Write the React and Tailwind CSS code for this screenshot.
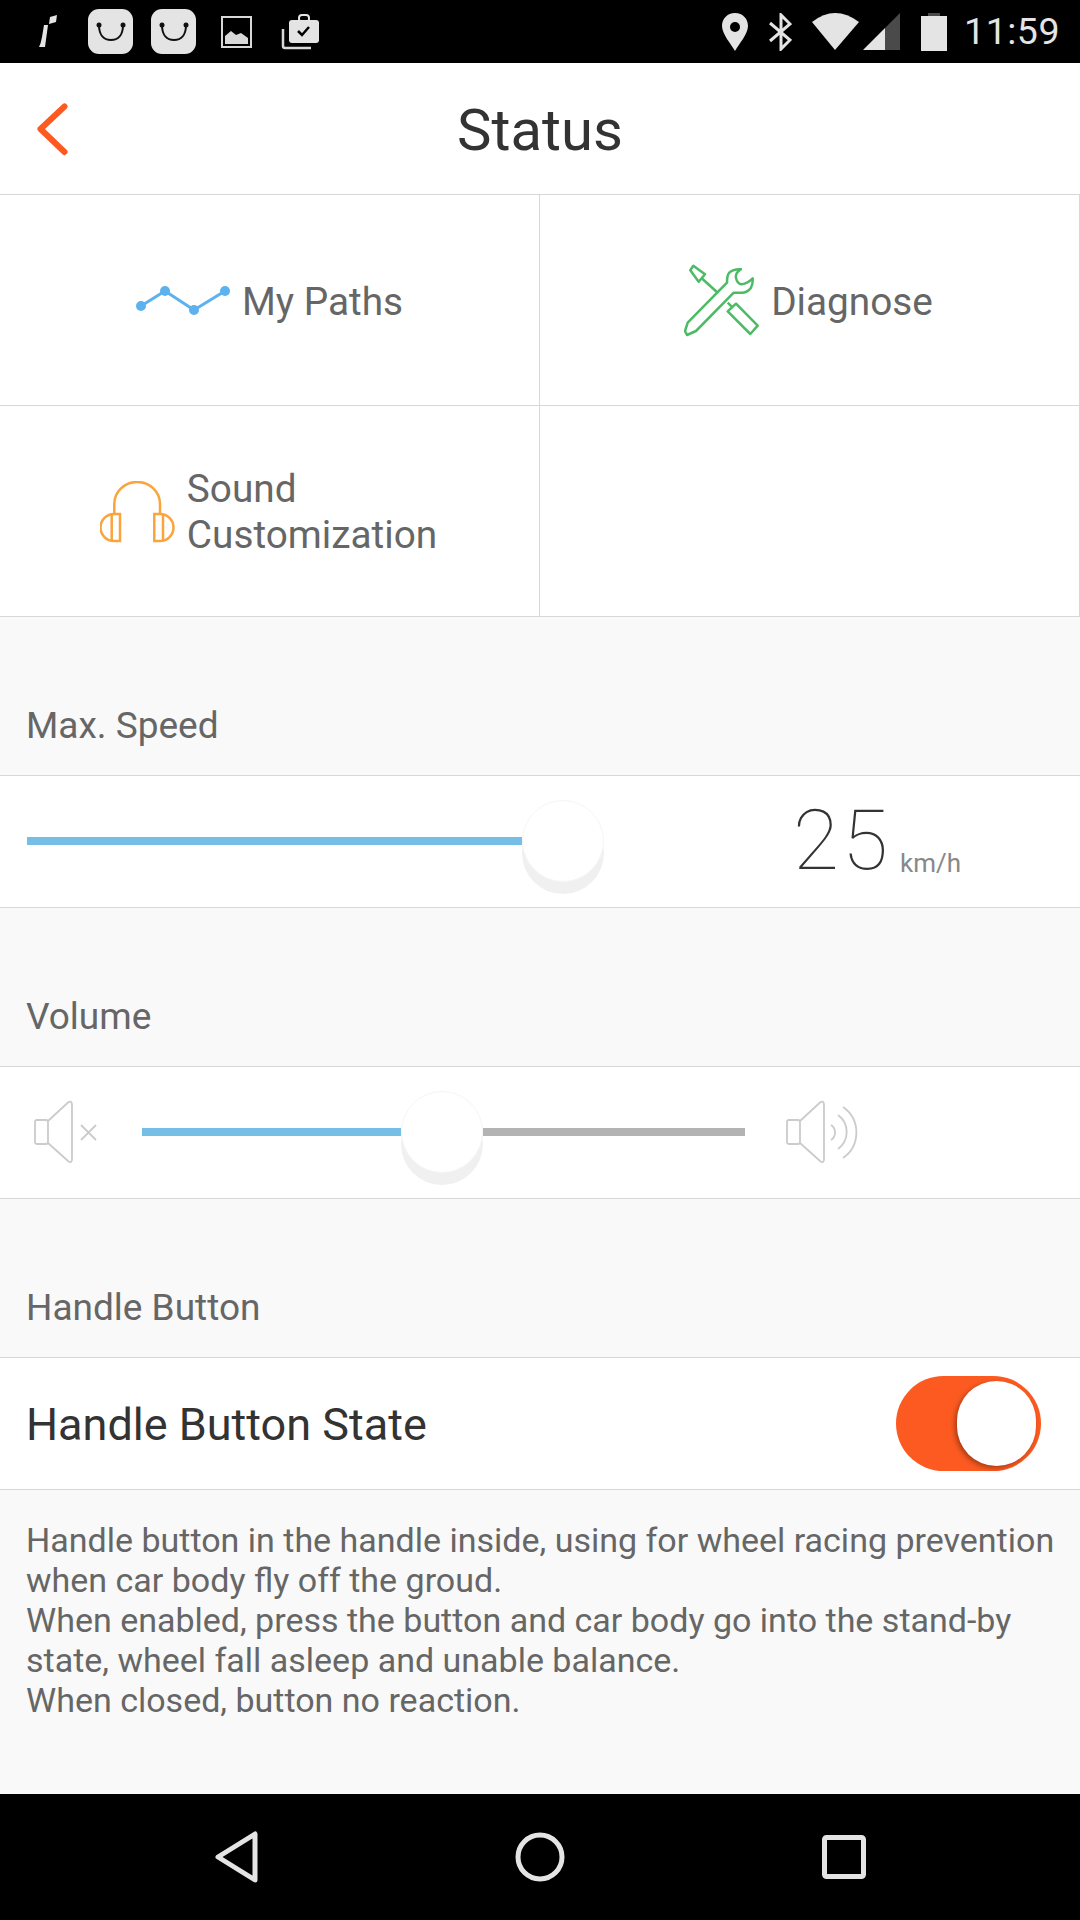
function StatusBar() {
  return (
    <div className="h-[63px] bg-black flex items-center text-[#e4e4e4]">
      {/* notification icons */}
      <svg className="ml-[38px]" width="19" height="33" viewBox="0 0 19 33">
        <path d="M6 10 L10 10 L7 32 L1 32 Q3 28 4 22 Z M12 2 L19 0 L18 7 L11 9 Z" fill="#e4e4e4" />
      </svg>
      <ShopTile className="ml-[31px]" />
      <ShopTile className="ml-[18px]" />
      <svg className="ml-[25px]" width="31" height="32" viewBox="0 0 31 32">
        <rect x="1" y="1" width="29" height="30" fill="none" stroke="#d8d8d8" strokeWidth="2" />
        <path d="M4 28 V20 L10 15 L15 19 L20 17 L27 22 V28 Z" fill="#d8d8d8" />
      </svg>
      <svg className="ml-[29px]" width="38" height="36" viewBox="0 0 38 36">
        <path d="M2 15 V32 Q2 34 4 34 H30" fill="none" stroke="#d8d8d8" strokeWidth="2.5" />
        <rect x="8" y="6" width="30" height="23" rx="3" fill="#e4e4e4" />
        <rect x="18" y="1" width="10" height="7" rx="3" fill="none" stroke="#e4e4e4" strokeWidth="2" />
        <path d="M17 17 L21 21 L28 13" fill="none" stroke="#000" strokeWidth="2.5" />
      </svg>

      {/* system icons */}
      <svg className="ml-auto" width="26" height="38" viewBox="0 0 26 38">
        <path d="M13 0 C5 0 0 6 0 13 C0 21 9 31 13 38 C17 31 26 21 26 13 C26 6 21 0 13 0 Z" fill="#e4e4e4" />
        <circle cx="13" cy="14" r="5" fill="#000" />
      </svg>
      <svg className="ml-[21px]" width="23" height="38" viewBox="0 0 23 38">
        <path d="M1 10 L21 27 L12 36 V2 L21 11 L1 28" fill="none" stroke="#e4e4e4" strokeWidth="3" />
      </svg>
      <svg className="ml-[20px]" width="47" height="37" viewBox="0 0 47 37">
        <path d="M0 9 Q23 -9 47 9 L23 37 Z" fill="#e4e4e4" />
      </svg>
      <svg className="ml-[4px]" width="37" height="37" viewBox="0 0 37 37">
        <path d="M0 37 L22 15 V37 Z" fill="#e4e4e4" />
        <path d="M22 15 L37 0 V37 H22 Z" fill="#4a4a4a" />
      </svg>
      <svg className="ml-[21px]" width="26" height="38" viewBox="0 0 26 38">
        <rect x="7" y="0" width="12" height="4" fill="#4a4a4a" />
        <rect x="0" y="3" width="26" height="35" fill="#e4e4e4" />
      </svg>
      <span className="ml-[17px] mr-[20px] text-[37.5px] leading-none tracking-[0.5px]">11:59</span>
    </div>
  );
}

function ShopTile({ className }) {
  return (
    <div className={`w-[45px] h-[45px] rounded-[11px] bg-[#e4e4e4] flex items-center justify-center ${className}`}>
      <svg width="30" height="20" viewBox="0 0 30 20">
        <path d="M3 3 C3 13 8 18 15 18 C22 18 27 13 27 3" fill="none" stroke="#111" strokeWidth="2" />
        <circle cx="3" cy="3" r="2.5" fill="#111" />
        <circle cx="27" cy="3" r="2.5" fill="#111" />
      </svg>
    </div>
  );
}

function PathsIcon() {
  return (
    <svg className="mt-[2px]" width="96" height="30" viewBox="0 0 96 30">
      <polyline points="7,20 31,5 60,24 91,5" fill="none" stroke="#5cb2ee" strokeWidth="3" />
      <circle cx="7" cy="20" r="5" fill="#5cb2ee" />
      <circle cx="31" cy="5" r="5" fill="#5cb2ee" />
      <circle cx="60" cy="24" r="5" fill="#5cb2ee" />
      <circle cx="91" cy="5" r="5" fill="#5cb2ee" />
    </svg>
  );
}

function ToolsIcon() {
  return (
    <svg width="75" height="73" viewBox="0 0 75 73" fill="none" stroke="#4dbb66" strokeWidth="2.5" strokeLinejoin="round">
      <path d="M9.3 1.7 L21 10.3 L14.7 17.7 L6.3 6.3 Z" />
      <path d="M17.7 14.3 L33.7 28.7" />
      <path d="M43.7 38.7 L47.7 42.7" />
      <path d="M52 39.7 L73.7 61.7 L66.3 70 L43.7 47.3 Z" />
      <path d="M3.7 58.7 L43 18.7 Q43 11 45.3 8.7 Q49 5 57 5.3 Q51 9 52 13.7 Q53 19 57 20.3 Q63 20 68.7 14.3 Q69 20 67 23.7 Q64 28 58.7 28.7 L49.7 28.7 L12 67 L3 71 L1 67 Z" />
    </svg>
  );
}

function HeadphonesIcon() {
  return (
    <svg className="mt-[1px]" width="75" height="62" viewBox="0 0 75 62" fill="none" stroke="#f9a43c" strokeWidth="2.5">
      <path d="M14.3 33 V23 A22.8 22 0 0 1 60 23 V33" />
      <path d="M20 33 H14 A13.5 13.5 0 0 0 14 60 H20 Z" />
      <path d="M11.7 33.5 V59.5" />
      <path d="M54.3 33 H60 A13.5 13.5 0 0 1 60 60 H54.3 Z" />
      <path d="M63 33.5 V59.5" />
    </svg>
  );
}

function SpeakerBody() {
  return (
    <>
      <rect x="1" y="20" width="13" height="24" rx="2" />
      <path d="M14 21 L34 2.5 Q38 0 38 5 V59 Q38 64 34 61 L14 43" />
    </>
  );
}

function MuteIcon() {
  return (
    <svg width="64" height="65" viewBox="0 0 64 65" fill="none" stroke="#cbcbcb" strokeWidth="1.8">
      <SpeakerBody />
      <path d="M47 25 L62 40 M62 25 L47 40" />
    </svg>
  );
}

function LoudIcon() {
  return (
    <svg width="76" height="65" viewBox="0 0 76 65" fill="none" stroke="#cbcbcb" strokeWidth="1.8">
      <SpeakerBody />
      <path d="M45 25 A9 9 0 0 1 45 40" />
      <path d="M52 15 A21 21 0 0 1 52 49" />
      <path d="M57 7 A31 31 0 0 1 57 58" />
    </svg>
  );
}

function Knob() {
  return (
    <div className="w-[82px] h-[82px] shrink-0 rounded-full bg-white border border-[#f5f5f5] shadow-[0_12px_0_#f0f0f0]"></div>
  );
}

function SectionLabel({ children }) {
  return (
    <div className="h-[159px] bg-[#f9f9f9] border-b border-[#d8d8d8] flex items-end pl-[26px] pb-[27px] text-[37px] leading-[44px] text-[#666]">
      {children}
    </div>
  );
}

function NavCell({ children, empty }) {
  return (
    <div className="h-[211px] pr-[2px] border-b border-r border-[#d8d8d8] flex items-center justify-center gap-[12px]">
      {!empty && children}
    </div>
  );
}

export default function App() {
  return (
    <div className="w-[1080px] h-[1920px] flex flex-col bg-[#f9f9f9] overflow-hidden font-[Roboto,sans-serif]">
      <StatusBar />

      {/* HEADER */}
      <div className="h-[132px] bg-white border-b border-[#d8d8d8] flex items-center justify-center relative">
        <svg className="absolute left-[36px] top-[38px]" width="34" height="55" viewBox="0 0 34 55">
          <path d="M28.5 5.5 L4.5 28 L28.5 51" fill="none" stroke="#fc5a20" strokeWidth="6" strokeLinecap="round" strokeLinejoin="round" />
        </svg>
        <h1 className="text-[58px] leading-none text-[#333] mt-[2px]">Status</h1>
      </div>

      {/* SHORTCUTS */}
      <div className="grid grid-cols-2 bg-white text-[38.75px] text-[#666]">
        <NavCell>
          <PathsIcon />
          <span className="mt-[4px]">My Paths</span>
        </NavCell>
        <NavCell>
          <ToolsIcon />
          <span className="mt-[4px]">Diagnose</span>
        </NavCell>
        <NavCell>
          <HeadphonesIcon />
          <span className="mt-[2px] leading-[46px]">Sound<br />Customization</span>
        </NavCell>
        <NavCell empty />
      </div>

      {/* MAX SPEED */}
      <SectionLabel>Max. Speed</SectionLabel>
      <div className="h-[132px] pb-[1px] bg-white border-b border-[#d8d8d8] flex items-center pl-[27px]">
        <div className="w-[495px] h-[8px] bg-[#75bfe6]"></div>
        <Knob />
        <div className="ml-[189px] flex items-baseline">
          <span className="text-[84px] leading-none font-thin tracking-[3px] text-[#333]">25</span>
          <span className="ml-[9px] text-[26px] text-[#888] translate-y-[3px]">km/h</span>
        </div>
      </div>

      {/* VOLUME */}
      <SectionLabel>Volume</SectionLabel>
      <div className="h-[132px] pb-[1px] bg-white border-b border-[#d8d8d8] flex items-center pl-[34px]">
        <MuteIcon />
        <div className="ml-[44px] w-[259px] h-[8px] bg-[#75bfe6]"></div>
        <Knob />
        <div className="w-[262px] h-[8px] bg-[#b3b3b3]"></div>
        <div className="ml-[41px]">
          <LoudIcon />
        </div>
      </div>

      {/* HANDLE BUTTON */}
      <SectionLabel>Handle Button</SectionLabel>
      <div className="h-[132px] bg-white border-b border-[#d8d8d8] flex items-center justify-between pl-[26px] pr-[39px]">
        <span className="text-[45px] mt-[3px] text-[#333]">Handle Button State</span>
        <div className="w-[145px] h-[95px] rounded-full bg-[#fc5a20] flex items-center justify-end pr-[5px]">
          <div className="w-[79px] h-[85px] rounded-full bg-white shadow-[-2px_2px_5px_rgba(0,0,0,0.35)]"></div>
        </div>
      </div>

      <p className="flex-1 pl-[26px] pt-[30px] whitespace-nowrap text-[34px] leading-[40px] text-[#666]">
        Handle button in the handle inside, using for wheel racing prevention
        <br />
        when car body fly off the groud.
        <br />
        When enabled, press the button and car body go into the stand-by
        <br />
        state, wheel fall asleep and unable balance.
        <br />
        When closed, button no reaction.
      </p>

      {/* ANDROID NAV BAR */}
      <div className="h-[126px] bg-black flex items-center">
        <svg className="ml-[215px]" width="44" height="52" viewBox="0 0 44 52">
          <path d="M40 3 V49 L3 26 Z" fill="none" stroke="#e4e4e4" strokeWidth="5" strokeLinejoin="round" />
        </svg>
        <svg className="ml-[256px]" width="50" height="50" viewBox="0 0 50 50">
          <circle cx="25" cy="25" r="22" fill="none" stroke="#e4e4e4" strokeWidth="5" />
        </svg>
        <svg className="ml-[257px]" width="44" height="44" viewBox="0 0 44 44">
          <rect x="2.5" y="2.5" width="39" height="39" rx="2" fill="none" stroke="#e4e4e4" strokeWidth="5" />
        </svg>
      </div>
    </div>
  );
}
